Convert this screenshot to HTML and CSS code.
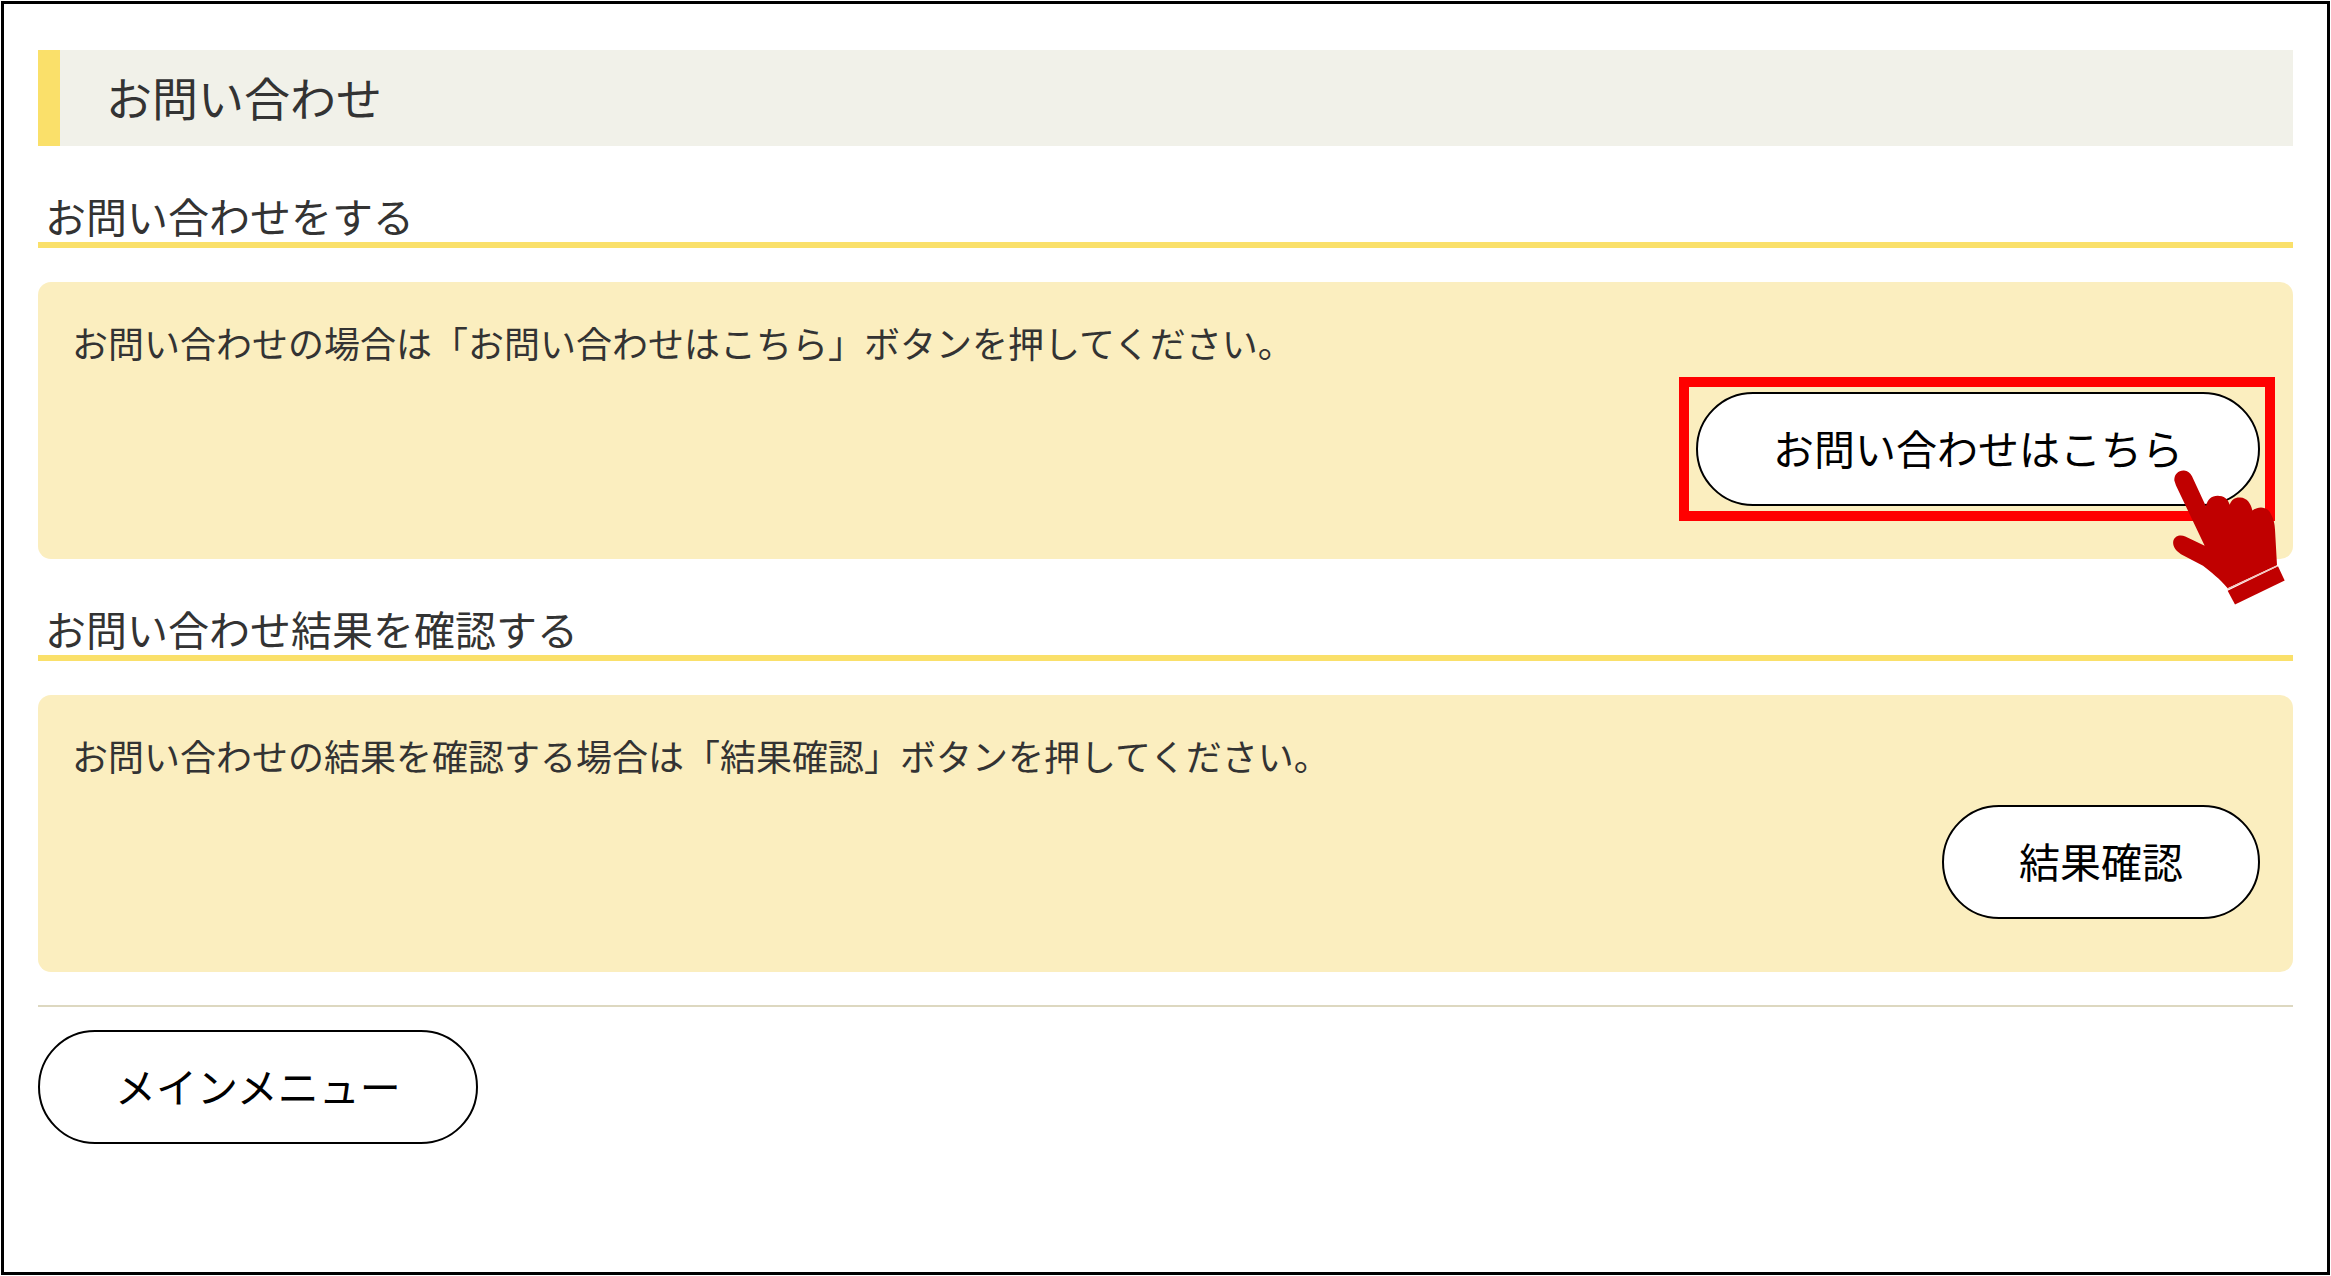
FILE: index.html
```html
<!DOCTYPE html>
<html lang="ja">
<head>
  <meta charset="utf-8">
  <meta name="viewport" content="width=device-width, initial-scale=1">
  <title>お問い合わせ</title>
  <link rel="stylesheet" href="styles.css">
</head>
<body>
  <main class="page">
    <h1 class="page-title">お問い合わせ</h1>

    <section>
      <h2 class="section-title">お問い合わせをする</h2>
      <div class="panel">
        <p class="panel-text">お問い合わせの場合は「お問い合わせはこちら」ボタンを押してください。</p>
        <div class="callout">
          <button type="button" class="button">お問い合わせはこちら</button>
          <svg class="pointer" viewBox="66 60 342 410" aria-hidden="true">
            <path class="pointer-shape" d="M73 94C72 76 85 63 102 64C113 65 121 71 126 81L168 172C172 151 184 140 203 140C221 140 234 149 239 167C245 151 255 144 271 145C291 146 303 163 307 184C325 170 348 172 359 188C371 208 374 222 375 242L381 348L233 417C208 388 185 371 159 350L93 315C75 304 67 290 70 275C74 260 91 255 106 262L164 290L78 109Z"/>
            <path class="pointer-shape" d="M233 425L384 351L404 394L255 466Z"/>
            <path class="pointer-seam" d="M232 420L382 350"/>
          </svg>
        </div>
      </div>
    </section>

    <section>
      <h2 class="section-title">お問い合わせ結果を確認する</h2>
      <div class="panel">
        <p class="panel-text">お問い合わせの結果を確認する場合は「結果確認」ボタンを押してください。</p>
        <button type="button" class="button">結果確認</button>
      </div>
    </section>

    <footer class="page-footer">
      <button type="button" class="button">メインメニュー</button>
    </footer>
  </main>
</body>
</html>
```

FILE: styles.css
```css
* {
  box-sizing: border-box;
}

body {
  margin: 0;
  padding: 1px;
  background: #fff;
  color: #333;
  font-family: "Noto Sans CJK JP", sans-serif;
  font-size: 36px;
}

.page {
  min-height: calc(100vh - 2px);
  padding: 46px 34px;
  border: 3px solid #000;
}

.page-title {
  margin: 0;
  padding: 0 46px 4px;
  border-left: 22px solid #fae06a;
  background: #f1f1e9;
  font-size: 46px;
  font-weight: 400;
  line-height: 92px;
}

.section-title {
  margin: 48px 0 34px;
  padding: 0 7px 6px;
  border-bottom: 6px solid #fae06a;
  font-size: 41px;
  font-weight: 400;
  line-height: 42px;
}

.panel {
  display: flex;
  flex-direction: column;
  align-items: flex-end;
  gap: 23px;
  padding: 33px 33px 53px 34px;
  border-radius: 13px;
  background: #fbeebf;
}

.panel-text {
  align-self: stretch;
  margin: 0;
  line-height: 54px;
}

.button {
  height: 114px;
  padding: 0 75px 5px;
  border: 2px solid #000;
  border-radius: 57px;
  background: #fff;
  color: #000;
  font-family: inherit;
  font-size: 41px;
  cursor: pointer;
}

.callout {
  position: relative;
  display: flex;
}

/* Red frame around the highlighted button */
.callout::after {
  content: "";
  position: absolute;
  inset: -15px -15px -15px -17px;
  border: 10px solid #f00;
  pointer-events: none;
}

.pointer {
  position: absolute;
  z-index: 1;
  right: -26px;
  bottom: -100px;
  width: 114px;
  height: 137px;
  pointer-events: none;
}

.pointer-shape {
  fill: #c00000;
}

.pointer-seam {
  fill: none;
  stroke: #f3c4bd;
  stroke-width: 4;
}

.page-footer {
  margin-top: 33px;
  padding-top: 23px;
  border-top: 2px solid #ddd8c0;
}
```
